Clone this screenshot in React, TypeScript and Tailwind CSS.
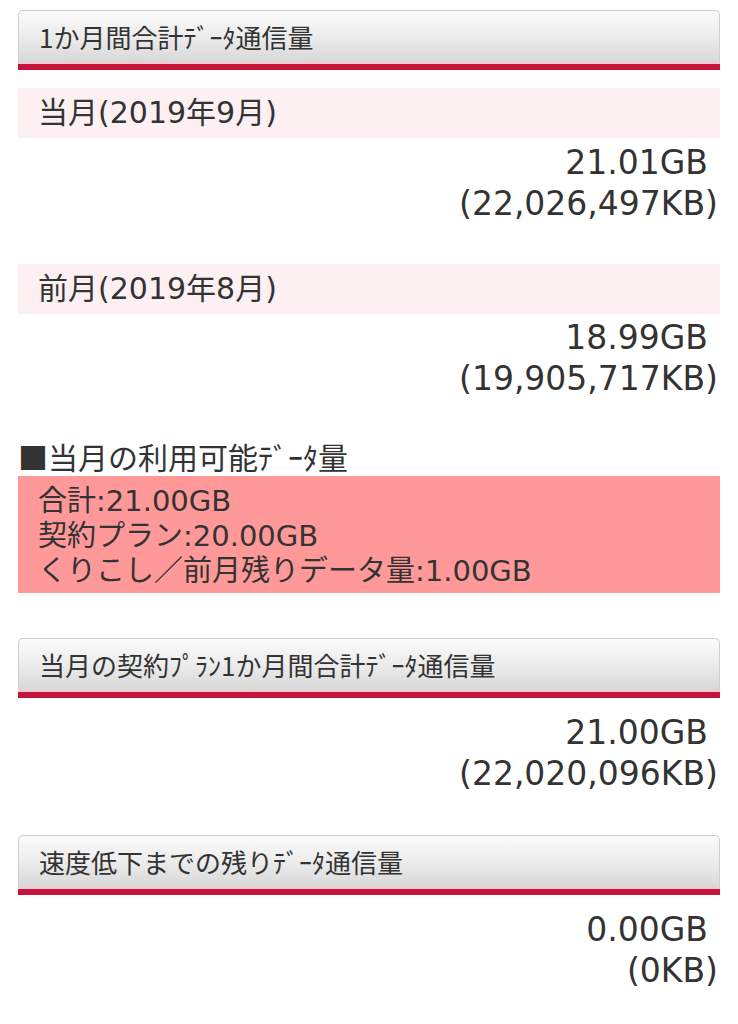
import * as React from "react";

const font = { fontFamily: '"Noto Sans CJK JP", "Noto Sans", sans-serif' };
const wideFont = { fontFamily: '"DejaVu Sans", "Noto Sans CJK JP", sans-serif' };

interface HeaderProps {
  title: string;
}

const SectionHeader: React.FC<HeaderProps> = ({ title }) => (
  <div>
    <div className="h-[52px] flex items-center pl-[20px] rounded-t-[5px] border border-b-0 border-[#cfcfcf] bg-gradient-to-b from-[#fbfbfb] via-[#ececec] to-[#d8d8d8] text-[26px] text-[#333] leading-none">
      {title}
    </div>
    <div className="h-[2px] bg-[#f3c9d0]" />
    <div className="h-[6px] bg-[#c8143c]" />
  </div>
);

interface LabelProps {
  text: string;
}

const MonthLabel: React.FC<LabelProps> = ({ text }) => (
  <div className="h-[50px] flex items-center pl-[20px] bg-[#fdf0f2] text-[30px] text-[#333] leading-none" style={wideFont}>
    {text}
  </div>
);

interface AmountProps {
  gb: string;
  kb: string;
  className?: string;
}

const Amount: React.FC<AmountProps> = ({ gb, kb, className }) => (
  <div className={"text-right pr-[2px] text-[33px] leading-[41px] text-[#333] " + (className ?? "")} style={wideFont}>
    <div className="pr-[10px]">{gb}</div>
    <div>{kb}</div>
  </div>
);

export default function App() {
  return (
    <div className="w-[738px] min-h-[1024px] bg-white px-[18px] pt-[10px]" style={font}>
      <SectionHeader title="1か月間合計ﾃﾞｰﾀ通信量" />

      <div className="mt-[18px]">
        <MonthLabel text="当月(2019年9月)" />
        <Amount className="mt-[4px]" gb="21.01GB" kb="(22,026,497KB)" />
      </div>

      <div className="mt-[40px]">
        <MonthLabel text="前月(2019年8月)" />
        <Amount className="mt-[3px]" gb="18.99GB" kb="(19,905,717KB)" />
      </div>

      <div className="mt-[37px] text-[30px] leading-[40px] text-[#333]">■当月の利用可能ﾃﾞｰﾀ量</div>
      <div className="bg-[#ff9999] pl-[20px] pt-[8px] pb-[4px] text-[29px] leading-[35px] text-[#333]" style={wideFont}>
        <div>合計:21.00GB</div>
        <div>契約プラン:20.00GB</div>
        <div>くりこし／前月残りデータ量:1.00GB</div>
      </div>

      <div className="mt-[45px]">
        <SectionHeader title="当月の契約ﾌﾟﾗﾝ1か月間合計ﾃﾞｰﾀ通信量" />
        <Amount className="mt-[14px]" gb="21.00GB" kb="(22,020,096KB)" />
      </div>

      <div className="mt-[41px]">
        <SectionHeader title="速度低下までの残りﾃﾞｰﾀ通信量" />
        <Amount className="mt-[14px]" gb="0.00GB" kb="(0KB)" />
      </div>
    </div>
  );
}
